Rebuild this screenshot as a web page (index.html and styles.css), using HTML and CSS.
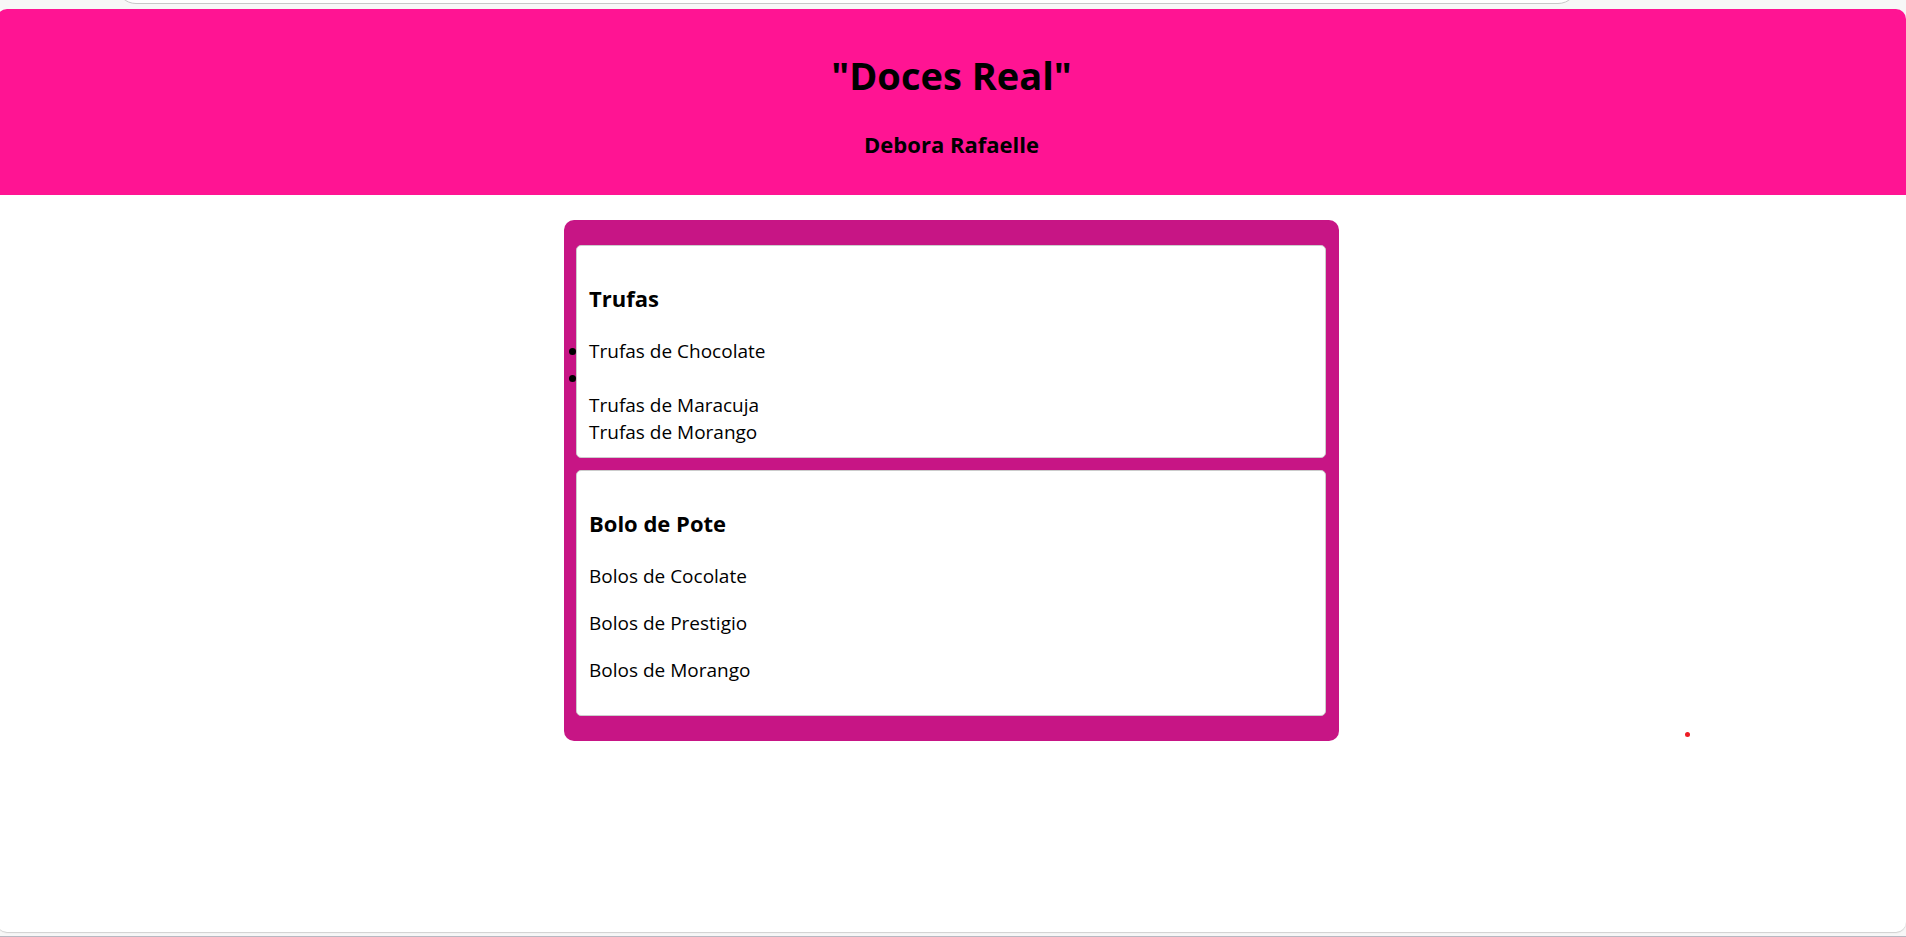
FILE: index.html
```html
<!DOCTYPE html>
<html lang="pt-BR">
<head>
<meta charset="utf-8">
<title>Doces Real</title>
<link rel="stylesheet" href="styles.css">
</head>
<body>
<div class="toolbar"><div class="address"></div></div>
<div class="page">
  <header class="header">
    <h1 class="title">"Doces Real"</h1>
    <h3 class="heading">Debora Rafaelle</h3>
  </header>
  <main class="menu">
    <section class="card">
      <h3 class="heading">Trufas</h3>
      <ul class="list">
        <li>Trufas de Chocolate</li>
        <li><br>Trufas de Maracuja<br>Trufas de Morango</li>
      </ul>
    </section>
    <section class="card">
      <h3 class="heading">Bolo de Pote</h3>
      <p class="item">Bolos de Cocolate</p>
      <p class="item">Bolos de Prestigio</p>
      <p class="item">Bolos de Morango</p>
    </section>
  </main>
  <span class="pointer"></span>
</div>
<div class="frame-bottom"></div>
</body>
</html>
```
FILE: styles.css
```css
* { box-sizing: border-box; }
body {
  margin: 0;
  height: 100vh;
  display: flex;
  flex-direction: column;
  overflow: hidden;
  background: #f7f7f7;
  color: #000;
  font-family: "Segoe UI", "Open Sans", "Noto Sans", sans-serif;
  font-size: 19px;
  line-height: 27px;
}
.toolbar {
  flex: none;
  height: 9px;
  padding: 0 328px 0 116px;
  overflow: hidden;
  display: flex;
  align-items: flex-start;
}
.address {
  flex: 1;
  height: 40px;
  margin-top: -36px;
  border: 1px solid #c8c8c8;
  border-radius: 20px;
  background: #fff;
}
.page {
  position: relative;
  flex: 1;
  margin-left: -3px;
  overflow: hidden;
  background: #fff;
  border-radius: 10px;
  box-shadow: 0 1px 1px #d0d0d0;
}
.frame-bottom {
  flex: none;
  height: 5px;
  border-bottom: 1px solid #b8b8c2;
}
.header {
  padding: 13px 12px 11px;
  background: #ff1493;
  text-align: center;
}
.title {
  margin: 27px 0;
  font-size: 38px;
  line-height: 53px;
}
.heading {
  margin: 24px 0;
  font-size: 22px;
  line-height: 31px;
}
.menu {
  display: flex;
  flex-direction: column;
  gap: 12px;
  width: 775px;
  max-width: 100%;
  margin: 25px auto;
  padding: 25px 13px 25px 12px;
  background: #c71585;
  border-radius: 10px;
}
.card {
  display: flow-root;
  padding: 13px 12px 11px;
  background: #fff;
  border: 1px solid #ccc;
  border-radius: 5px;
}
.list { margin: 0; padding: 0; }
.item { margin: 20px 0; }
.pointer {
  position: absolute;
  left: 1688px;
  top: 723px;
  width: 5px;
  height: 5px;
  border-radius: 50%;
  background: #ed1c24;
}
```
